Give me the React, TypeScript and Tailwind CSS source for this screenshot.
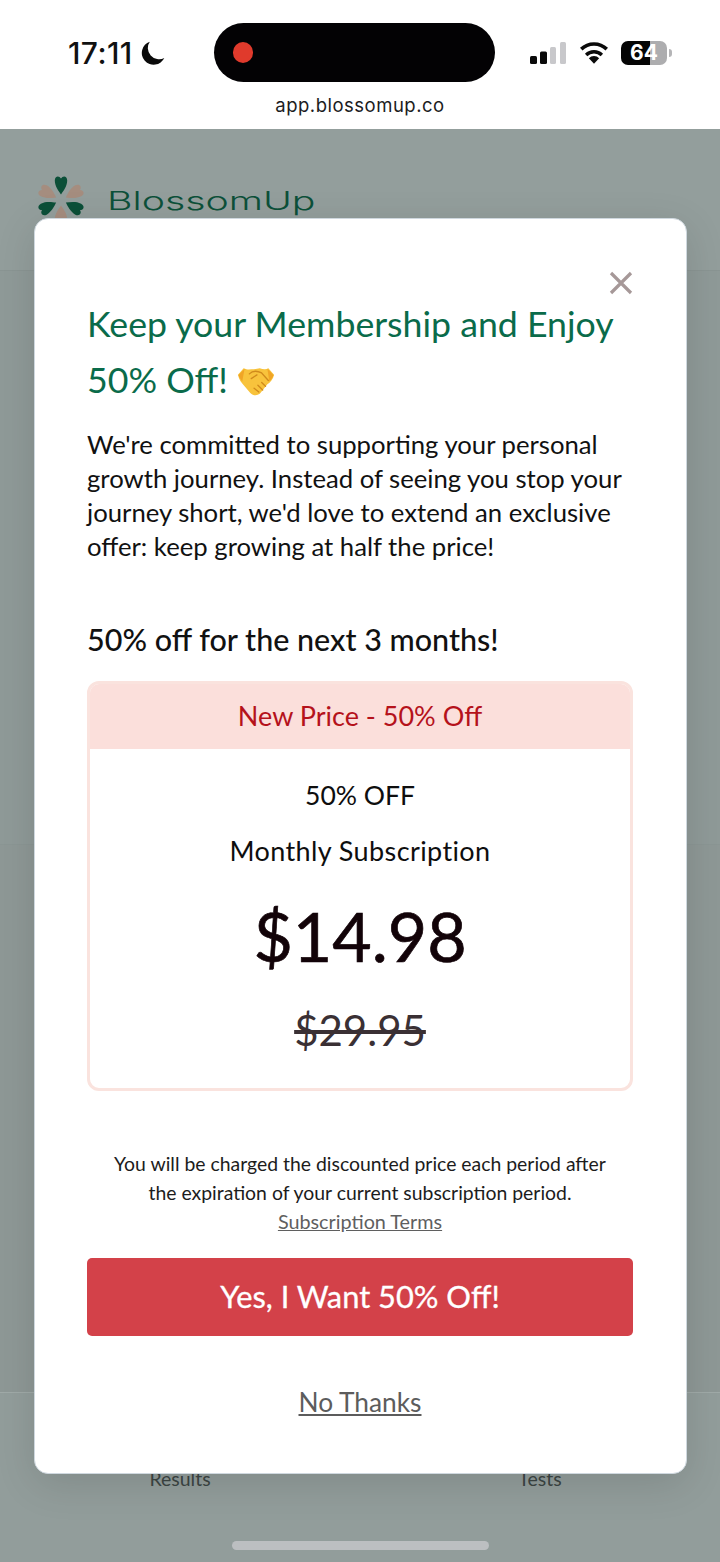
const FONT = "font-['Lato','Open_Sans',sans-serif]";

function StatusBar() {
  return (
    <div className="h-[129px] bg-white shrink-0 flex flex-col items-center">
      <div className="w-full pt-[23px] pl-[68px] pr-[48px] flex items-center">
        <div className="flex items-center gap-[6px] w-[146px] shrink-0">
          <span className="text-[30px] leading-none font-medium tracking-[0.4px] text-[#111] font-['Inter',sans-serif]">17:11</span>
          <svg width="28" height="28" viewBox="0 0 26 26">
            <path d="M10 2.5a11 11 0 1 0 13.5 15.2A10.5 10.5 0 0 1 10 2.5z" fill="#0a0a0a" />
          </svg>
        </div>
        <div className="w-[281px] h-[59px] shrink-0 rounded-full bg-[#030204] flex items-center pl-[19px]">
          <div className="w-[20px] h-[21px] rounded-full bg-[#e03a2c]" />
        </div>
        <div className="flex items-center flex-1 justify-end gap-[14px]">
          <svg width="36" height="22" viewBox="0 0 36 22">
            <rect x="0" y="14" width="7" height="8" rx="1.5" fill="#0a0a0a" />
            <rect x="10" y="9.5" width="7" height="12.5" rx="1.5" fill="#0a0a0a" />
            <rect x="20" y="5" width="6" height="17" rx="1.5" fill="#c8c8cb" />
            <rect x="30" y="0" width="6" height="22" rx="1.5" fill="#c8c8cb" />
          </svg>
          <svg width="30" height="23" viewBox="0 0 32 24" className="-ml-[1px]">
            <path d="M16 24l-5.5-6a7.8 7.8 0 0 1 11 0z" fill="#0a0a0a" />
            <path d="M7.6 14.6a12 12 0 0 1 16.8 0" fill="none" stroke="#0a0a0a" strokeWidth="3.6" />
            <path d="M2.4 8.4a19.4 19.4 0 0 1 27.2 0" fill="none" stroke="#0a0a0a" strokeWidth="3.8" />
          </svg>
          <div className="relative flex items-center -ml-[2px]">
            <div className="w-[46px] h-[24px] rounded-[7px] overflow-hidden flex">
              <div className="w-[29px] bg-[#050505]" />
              <div className="flex-1 bg-[#adadaf]" />
            </div>
            <span className="absolute left-0 top-0 w-[46px] h-[24px] flex items-center justify-center text-[21px] leading-none font-bold text-white font-['Inter',sans-serif]">64</span>
            <div className="w-[3px] h-[8px] ml-[2px] rounded-r-full bg-[#b5b5b7]" />
          </div>
        </div>
      </div>
      <div className="mt-[12px] text-[18.5px] leading-[22px] tracking-[0.5px] text-[#1c1c1e] font-['Inter',sans-serif]">app.blossomup.co</div>
    </div>
  );
}

function Petal({ angle, color }: { angle: number; color: string }) {
  return (
    <path
      transform={`rotate(${angle} 25 25)`}
      d="M25 19.5C22.5 16 18.8 11 18.8 5.5C18.8 1 23 0 25 3.5C27 0 31.2 1 31.2 5.5C31.2 11 27.5 16 25 19.5z"
      fill={color}
    />
  );
}

function PageBehind() {
  return (
    <div className="flex-1 flex flex-col bg-[#939e9c]">
      <div className="h-[142px] shrink-0 border-b border-[#8a9593] flex items-start pt-[46px] pl-[36px] gap-[21px]">
        <svg width="50" height="50" viewBox="0 0 50 50" className="shrink-0">
          <Petal angle={0} color="#0b4f38" />
          <Petal angle={62} color="#a58d7f" />
          <Petal angle={118} color="#0b4f38" />
          <Petal angle={180} color="#a58d7f" />
          <Petal angle={242} color="#0b4f38" />
          <Petal angle={298} color="#a58d7f" />
        </svg>
        <span className="mt-[8px] inline-block origin-left scale-x-[1.57] text-[25px] leading-[36px] font-light text-[#0c5039] font-['Inter',sans-serif]">
          BlossomUp
        </span>
      </div>
      <div className="h-[574px] shrink-0 bg-[#8f9a98] border-b border-[#8b9694]" />
      <div className="flex-1 bg-[#8e9896]" />
      <div className="h-[170px] shrink-0 border-t border-[#a0aaa8] bg-[#929d9b] grid grid-cols-2 pt-[72px]">
        <span className={`text-center text-[19.5px] leading-[28px] text-[#3c4543] ${FONT}`}>Results</span>
        <span className={`text-center text-[19.5px] leading-[28px] text-[#3c4543] ${FONT}`}>Tests</span>
      </div>
    </div>
  );
}

function Handshake() {
  return (
    <svg width="38" height="31" viewBox="0 0 40 32" className="shrink-0 mt-[3px]">
      <path d="M1 9 L7 2 C11 4 14 3 18 3 L24 2 C27 3 30 4 33 2 L39 9 C38 14 35 17 32 19 L24 29 C21 31 17 31 14 28 L8 21 C5 18 2 14 1 9z" fill="#f8c33c" />
      <path d="M8 2.5 L1.5 9.5 C2.5 12 4 14 5.5 16z M32 2.5 L38.5 9.5 C37.5 12 36 14 34 16z" fill="#f0a526" />
      <path d="M13 8 C17 4 22 5 26 7 L33 15 M21 9 L15 13 M18 23 L23 27 M22 20 L27 25 M26 17 L30 21" fill="none" stroke="#d08a1c" strokeWidth="1.4" strokeLinecap="round" />
    </svg>
  );
}

function OfferCard() {
  return (
    <div className="mt-[22px] rounded-[12px] border-[3px] border-[#fae3de] overflow-hidden bg-white">
      <div className="h-[65px] bg-[#fbdfdb] flex items-center justify-center text-[27px] text-[#b5121b]">New Price - 50% Off</div>
      <div className="h-[339px] flex flex-col items-center text-[#0e0e0e]">
        <div className="mt-[26px] text-[26.5px] leading-[40px]">50% OFF</div>
        <div className="mt-[16px] text-[27px] tracking-[0.4px] leading-[40px]">Monthly Subscription</div>
        <div className="mt-[24px] text-[68px] leading-[82px] text-[#120308] [-webkit-text-stroke:0.7px_#120308]">$14.98</div>
        <div className="mt-[28px] text-[42px] leading-[50px] text-[#3a3034] line-through">$29.95</div>
      </div>
    </div>
  );
}

function Modal() {
  return (
    <div className={`absolute left-[34px] top-[218px] w-[653px] h-[1256px] bg-white rounded-[14px] border border-[#cfd8df] shadow-[0_10px_40px_rgba(0,0,0,0.12)] pl-[52px] pr-[53px] pt-[77px] ${FONT}`}>
      <svg width="24" height="24" viewBox="0 0 24 24" className="absolute right-[53px] top-[52px]">
        <path d="M2 2L22 22M22 2L2 22" stroke="#a69898" strokeWidth="3.2" />
      </svg>
      <h1 className="text-[35.7px] leading-[56px] text-[#0a6b4a]">
        Keep your Membership and Enjoy
        <span className="flex items-center gap-[9px]">
          50% Off! <Handshake />
        </span>
      </h1>
      <p className="mt-[19px] text-[25.7px] leading-[34px] text-[#111]">
        We're committed to supporting your personal growth journey. Instead of seeing you stop your journey short, we'd love to extend an exclusive offer: keep growing at half the price!
      </p>
      <h2 className="mt-[56px] text-[30.5px] leading-[40px] font-medium text-[#111]">50% off for the next 3 months!</h2>
      <OfferCard />
      <p className="mt-[58px] px-[20px] text-center text-[19.4px] leading-[29px] text-[#1c1c1c]">
        You will be charged the discounted price each period after the expiration of your current subscription period.
        <br />
        <span className="underline text-[19.8px] text-[#5f5f5f]">Subscription Terms</span>
      </p>
      <button className="mt-[22px] w-full h-[78px] rounded-[5px] bg-[#d34149] text-white text-[30.8px] [-webkit-text-stroke:0.3px_#ffffff]">Yes, I Want 50% Off!</button>
      <div className="mt-[46px] text-center">
        <span className="text-[26.3px] leading-[40px] underline text-[#5c5c5c]">No Thanks</span>
      </div>
    </div>
  );
}

export default function App() {
  return (
    <div className="relative w-[720px] h-[1562px] overflow-hidden flex flex-col">
      <StatusBar />
      <PageBehind />
      <Modal />
      <div className="absolute left-[232px] top-[1541px] w-[257px] h-[9px] rounded-full bg-[#bcbfc1]" />
    </div>
  );
}
